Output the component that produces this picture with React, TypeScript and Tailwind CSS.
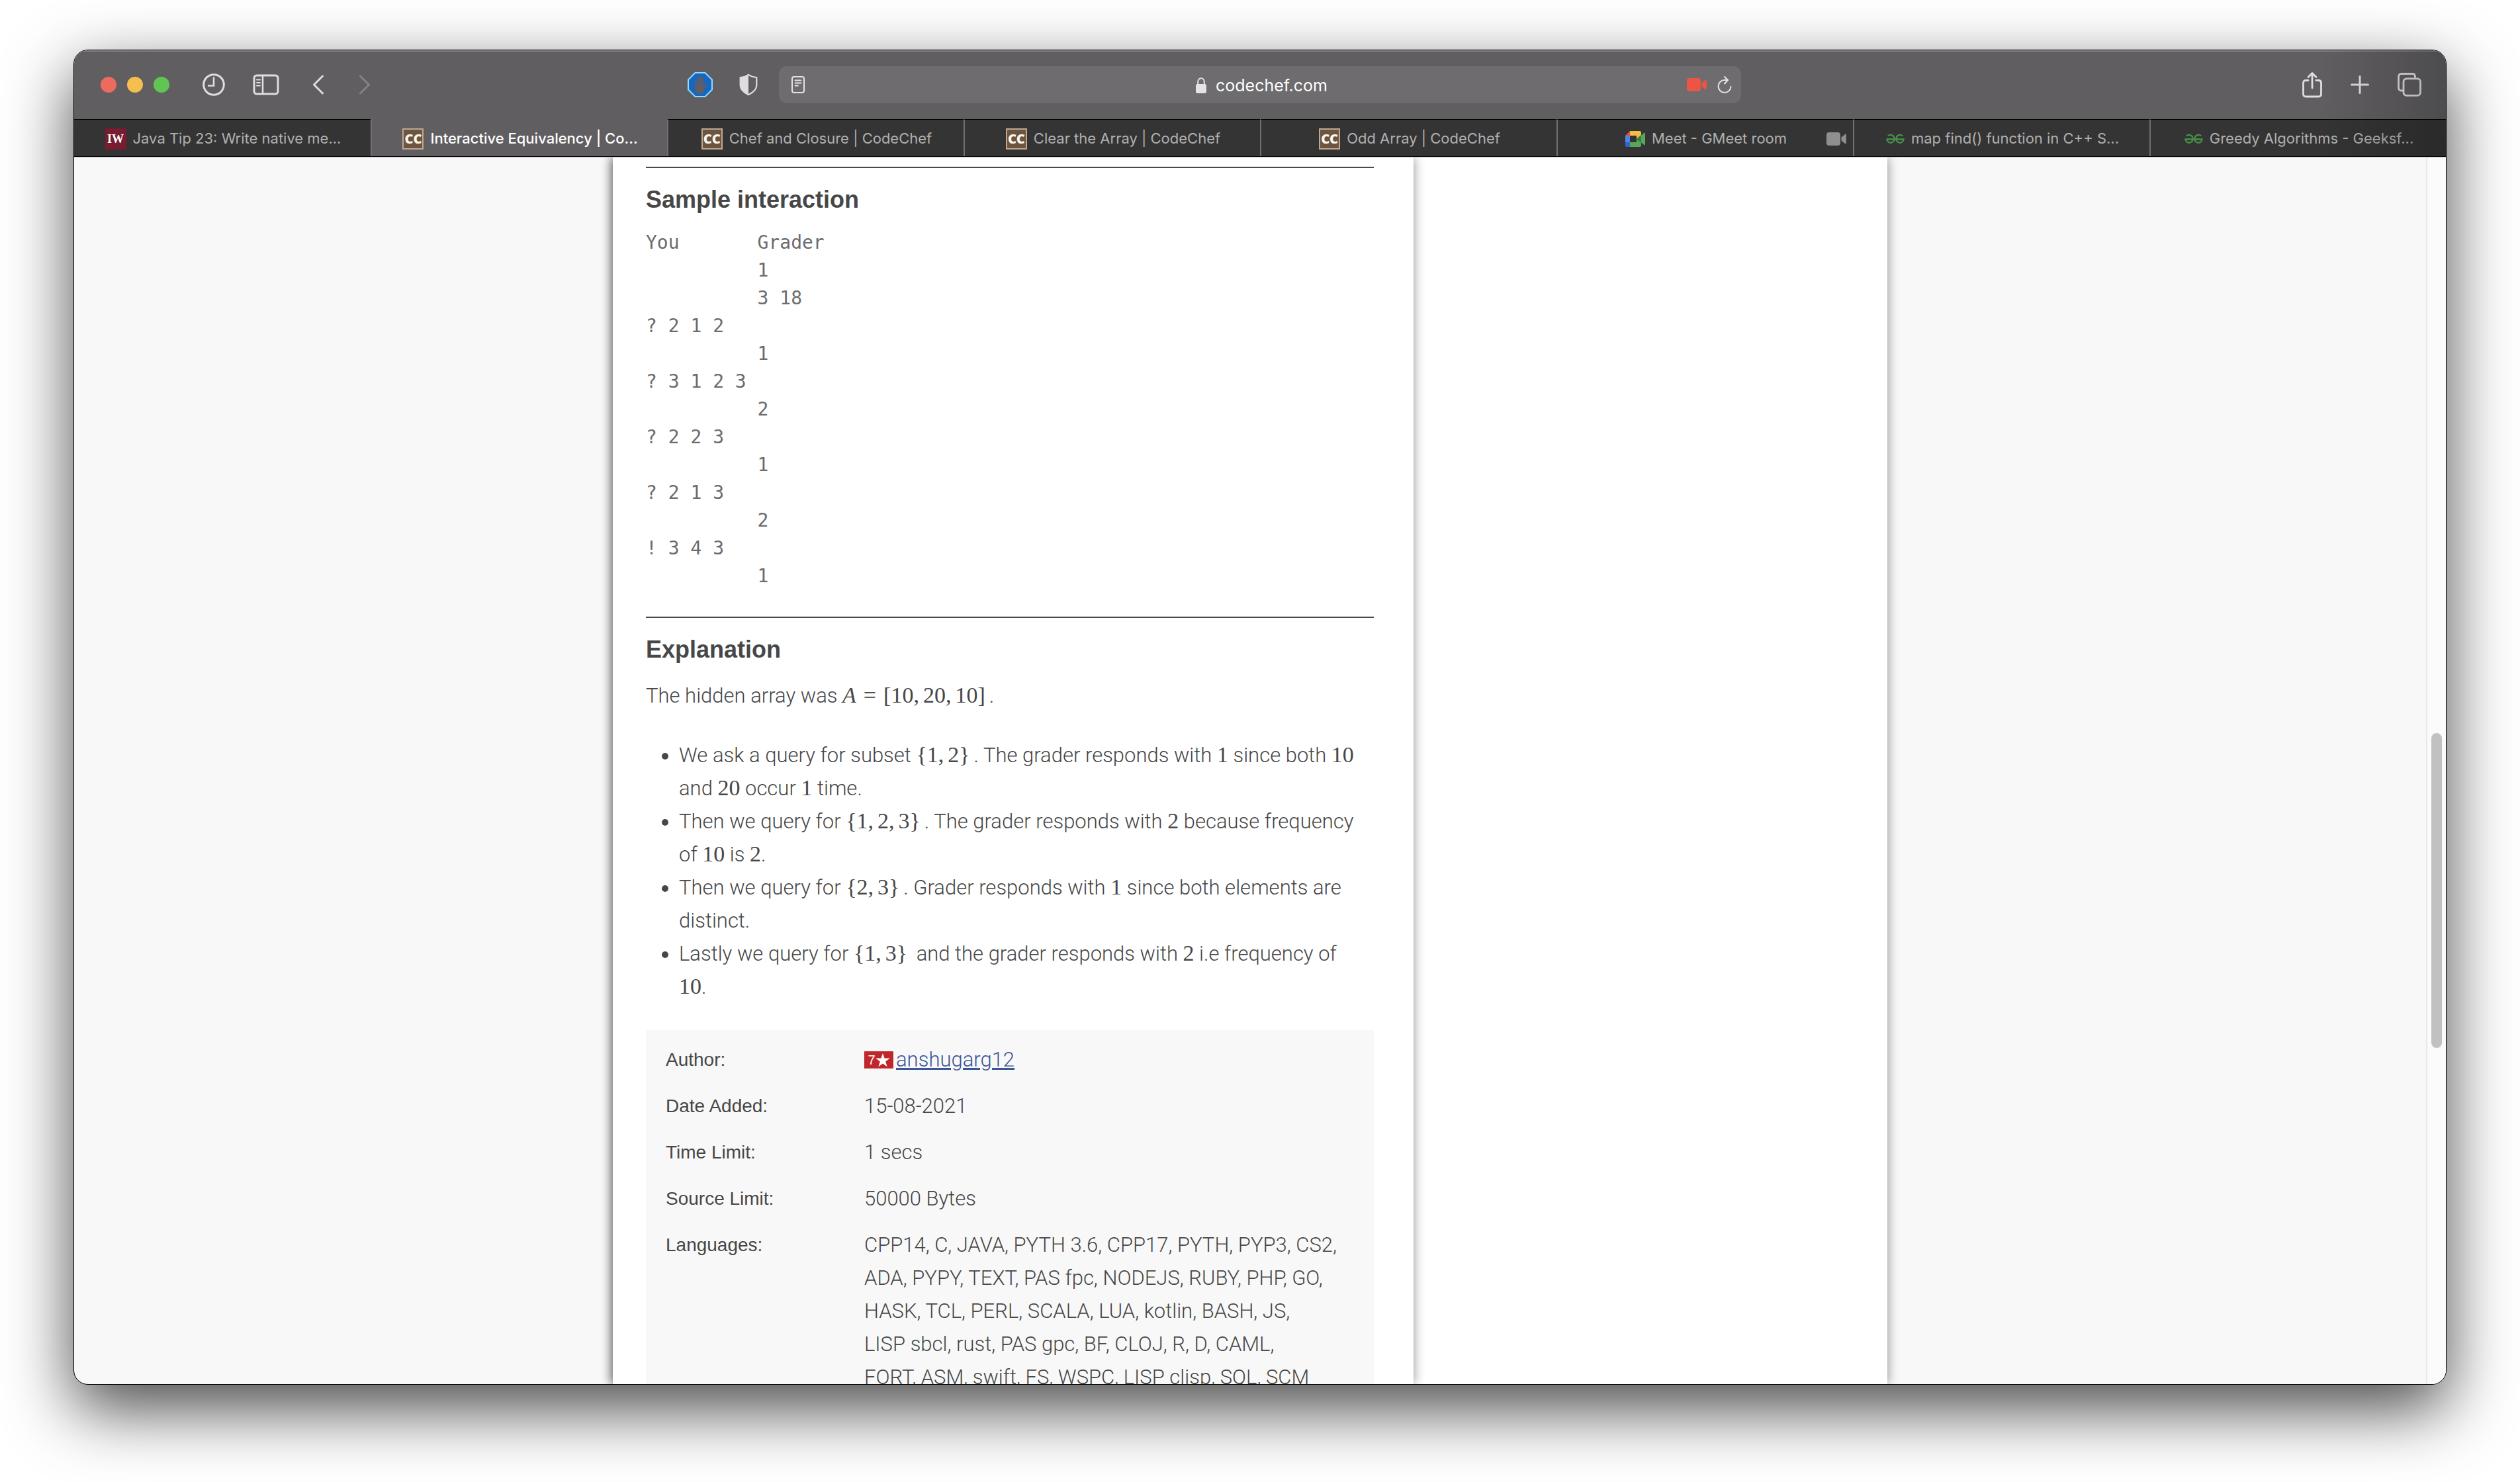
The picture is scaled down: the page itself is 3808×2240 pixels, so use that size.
import type { ReactNode } from 'react';

/* ---------- toolbar icons ---------- */

const ClockIcon = () => (
  <svg width="34" height="40" viewBox="0 0 34 40" fill="none" stroke="#dfdde0" strokeWidth="3">
    <circle cx="17" cy="20" r="15.3" />
    <path d="M17 8.5V21.5H8" strokeWidth="2.6" />
  </svg>
);

const SidebarIcon = () => (
  <svg width="40" height="32" viewBox="0 0 40 32" fill="none" stroke="#dfdde0">
    <rect x="2" y="2" width="36" height="28" rx="4" strokeWidth="3" />
    <path d="M15 2V30" strokeWidth="2.6" />
    <path d="M6 8.5H11M6 13H11M6 17.5H11" strokeWidth="2" strokeLinecap="round" />
  </svg>
);

const BackIcon = () => (
  <svg width="18" height="32" viewBox="0 0 18 32" fill="none" stroke="#dfdde0" strokeWidth="3" strokeLinecap="round" strokeLinejoin="round">
    <path d="M15.5 3L2.5 16L15.5 29" />
  </svg>
);

const ForwardIcon = () => (
  <svg width="18" height="32" viewBox="0 0 18 32" fill="none" stroke="#858386" strokeWidth="3" strokeLinecap="round" strokeLinejoin="round">
    <path d="M2.5 3L15.5 16L2.5 29" />
  </svg>
);

const BlockerIcon = () => (
  <svg width="38" height="38" viewBox="0 0 38 38" fill="none">
    <path d="M11.5 1H26.5L37 11.5V26.5L26.5 37H11.5L1 26.5V11.5Z" fill="#1766c0" stroke="#8fdcff" strokeWidth="2" />
    <g stroke="#605e61" strokeWidth="2.6" strokeLinecap="round">
      <path d="M12.3 13V22M15.8 8.500V20M19.300 7V20M22.800 9V21" />
      <path d="M28 17.500L24 25" />
    </g>
    <path d="M11 19H24V24L26 22C25 28 24 32.500 18.500 32.500C13 32.500 11 29 11 24Z" fill="#605e61" />
  </svg>
);

const ShieldIcon = () => (
  <svg width="28" height="34" viewBox="0 0 28 34">
    <path d="M14 1.800C17.500 4.300 21.500 5.500 26.300 6V18C26.300 24.500 21 28.800 14 32.200C7 28.800 1.700 24.500 1.700 18V6C6.500 5.500 10.500 4.300 14 1.800Z" fill="none" stroke="#dfdde0" strokeWidth="2.200" strokeLinejoin="round" />
    <path d="M14 1.800V32.200C7 28.800 1.700 24.500 1.700 18V6C6.500 5.500 10.500 4.300 14 1.800Z" fill="#dfdde0" />
  </svg>
);

const ReaderIcon = () => (
  <svg width="20" height="26" viewBox="0 0 20 26" fill="none" stroke="#e4e3e5" strokeLinecap="round">
    <rect x="1" y="1" width="18" height="24" rx="3" strokeWidth="2" />
    <path d="M5.500 6.500H14.500M5.500 10.500H14.500M5.500 14.500H10" strokeWidth="1.800" />
  </svg>
);

const LockIcon = () => (
  <svg width="16" height="24" viewBox="0 0 16 24">
    <path d="M3.200 11V6.800C3.200 3.700 5.100 1.200 8 1.200S12.800 3.700 12.800 6.800V11" fill="none" stroke="#e4e3e5" strokeWidth="2" />
    <rect x="0" y="10" width="16" height="14" rx="2.500" fill="#e4e3e5" />
  </svg>
);

const CameraIcon = ({ color }: { color: string }) => (
  <svg width="30" height="20" viewBox="0 0 30 20" fill={color}>
    <rect x="0" y="0" width="21" height="20" rx="4" />
    <path d="M22.500 7.500L28 3C29 2.300 29.800 2.600 29.800 3.800V16.200C29.800 17.400 29 17.700 28 17L22.500 12.500Z" />
  </svg>
);

const ReloadIcon = () => (
  <svg width="22" height="28" viewBox="0 0 22 28" fill="none" stroke="#e4e3e5" strokeWidth="2" strokeLinecap="round" strokeLinejoin="round">
    <path d="M15.500 7H11A9.500 9.500 0 1 0 20.500 17" />
    <path d="M11 2L16 7L11 12.500" />
  </svg>
);

const ShareIcon = () => (
  <svg width="30" height="40" viewBox="0 0 30 40" fill="none" stroke="#dfdde0" strokeWidth="2.800" strokeLinecap="round" strokeLinejoin="round">
    <path d="M9 13.500H5.500C3 13.500 1.500 15 1.500 17.500V34C1.500 36.500 3 38 5.500 38H24.500C27 38 28.500 36.500 28.500 34V17.500C28.500 15 27 13.500 24.500 13.500H21" />
    <path d="M15 25V3M9 8.500L15 2.500L21 8.500" />
  </svg>
);

const PlusIcon = () => (
  <svg width="28" height="28" viewBox="0 0 28 28" stroke="#dfdde0" strokeWidth="3" strokeLinecap="round">
    <path d="M14 1.500V26.500M1.500 14H26.500" />
  </svg>
);

const TabsIcon = () => (
  <svg width="36" height="36" viewBox="0 0 36 36" fill="none" stroke="#dfdde0" strokeWidth="2.800">
    <path d="M9 27H6C3 27 1.500 25.500 1.500 22.500V6C1.500 3 3 1.500 6 1.500H22C25 1.500 26.500 3 26.500 6V8.500" />
    <rect x="9" y="8.800" width="25.500" height="25.500" rx="4.500" />
  </svg>
);

/* ---------- favicons ---------- */

const ChefFavicon = () => (
  <span className="flex size-8 shrink-0 items-center justify-center border-2 border-[#bfa88f] bg-[#6c5541] font-['Open_Sans'] text-[20px] font-extrabold leading-none text-[#fdf6ec]">
    CC
  </span>
);

const InfoWorldFavicon = () => (
  <span className="flex size-8 shrink-0 items-center justify-center bg-[#771c31] font-['Liberation_Serif'] text-[18px] font-bold leading-none text-white">
    IW
  </span>
);

const MeetFavicon = () => (
  <svg width="30" height="24" viewBox="0 0 30 24" className="shrink-0">
    <path d="M0 7L7 0V7Z" fill="#e2503f" />
    <path d="M7 0H21.500Q24 0 24 2.500V7H7Z" fill="#f3bc42" />
    <path d="M0 7H7V17H0Z" fill="#4c83ec" />
    <path d="M0 17H7V24H2.500Q0 24 0 21.500Z" fill="#2f66cf" />
    <path d="M7 17H17V12L24 6V21.500Q24 24 21.500 24H7Z" fill="#57a65c" />
    <path d="M17 7H24V6L17 12Z" fill="#f3bc42" />
    <path d="M17 12L24 6V18Z" fill="#387c3e" />
    <path d="M24 6.500L28.500 3Q30 2.200 30 4V20Q30 21.800 28.500 21L24 17.500Z" fill="#57a65c" />
  </svg>
);

const GeeksFavicon = () => (
  <svg width="28" height="16" viewBox="0 0 28 16" className="shrink-0" fill="none" stroke="#479149" strokeWidth="2.400">
    <path d="M3 3.500C5 1 12.500 .8 12.500 8C12.500 15.500 2 15.500 1.500 8.500H26.500C26 15.500 15.500 15.500 15.500 8C15.500 .8 23 1 25 3.500" />
  </svg>
);

/* ---------- browser chrome ---------- */

interface TabInfo {
  title: string;
  icon: ReactNode;
  active?: boolean;
  capturing?: boolean;
}

const tabs: TabInfo[] = [
  { title: 'Java Tip 23: Write native me...', icon: <InfoWorldFavicon /> },
  { title: 'Interactive Equivalency | Co...', icon: <ChefFavicon />, active: true },
  { title: 'Chef and Closure | CodeChef', icon: <ChefFavicon /> },
  { title: 'Clear the Array | CodeChef', icon: <ChefFavicon /> },
  { title: 'Odd Array | CodeChef', icon: <ChefFavicon /> },
  { title: 'Meet - GMeet room', icon: <MeetFavicon />, capturing: true },
  { title: 'map find() function in C++ S...', icon: <GeeksFavicon /> },
  { title: 'Greedy Algorithms - Geeksf...', icon: <GeeksFavicon /> },
];

function Tab({ tab }: { tab: TabInfo }) {
  return (
    <button
      type="button"
      role="tab"
      aria-selected={!!tab.active}
      className={
        'relative flex h-14 min-w-0 items-center justify-center gap-[10px] border-t border-l-2 pt-[2px] pl-[2px] text-[22px] whitespace-nowrap first:border-l-0 ' +
        (tab.active
          ? 'border-t-[#605e61] border-l-[#706f71] bg-[#605e61] font-medium text-white'
          : 'border-t-black border-l-[#706f71] bg-[#343435] text-[#b0b0b0]')
      }
    >
      {tab.icon}
      <span>{tab.title}</span>
      {tab.capturing && (
        <span className="absolute right-[10px]">
          <CameraIcon color="#8f8f8f" />
        </span>
      )}
    </button>
  );
}

function IconButton({ label, children }: { label: string; children: ReactNode }) {
  return (
    <button type="button" aria-label={label} className="flex shrink-0 items-center justify-center">
      {children}
    </button>
  );
}

function Toolbar() {
  return (
    <div className="grid h-[104px] grid-cols-[1fr_1454px_1fr] items-center border-t-2 border-[#858386] bg-[#605e61] pb-[2px]">
      <div className="flex items-center justify-between pr-8 pl-10">
        <div className="flex items-center">
          <div className="flex gap-4">
            <button type="button" aria-label="Close window" className="size-6 rounded-full bg-[#ec6a5e]" />
            <button type="button" aria-label="Minimize window" className="size-6 rounded-full bg-[#f4bf4f]" />
            <button type="button" aria-label="Zoom window" className="size-6 rounded-full bg-[#61c554]" />
          </div>
          <div className="ml-[50px] flex items-center">
            <IconButton label="History"><ClockIcon /></IconButton>
            <div className="ml-[42px] flex"><IconButton label="Show sidebar"><SidebarIcon /></IconButton></div>
            <div className="ml-[50px] flex gap-[52px]">
              <IconButton label="Back"><BackIcon /></IconButton>
              <IconButton label="Forward"><ForwardIcon /></IconButton>
            </div>
          </div>
        </div>
        <div className="flex items-center gap-10">
          <IconButton label="Content blocker"><BlockerIcon /></IconButton>
          <IconButton label="Privacy report"><ShieldIcon /></IconButton>
        </div>
      </div>

      <div className="grid h-14 grid-cols-[1fr_auto_1fr] items-center rounded-xl bg-[#6e6c6f] pr-[14px] pl-[19px]">
        <div className="flex"><IconButton label="Show reader"><ReaderIcon /></IconButton></div>
        <button type="button" className="flex items-center gap-[14px] pt-[2px] text-[25px] leading-8 text-white">
          <LockIcon />
          codechef.com
        </button>
        <div className="flex items-center justify-end gap-4">
          <IconButton label="Camera in use"><CameraIcon color="#ec5545" /></IconButton>
          <IconButton label="Reload"><ReloadIcon /></IconButton>
        </div>
      </div>

      <div className="flex items-center justify-end gap-[43px] pr-[37px]">
        <IconButton label="Share"><ShareIcon /></IconButton>
        <IconButton label="New tab"><PlusIcon /></IconButton>
        <IconButton label="Show all tabs"><TabsIcon /></IconButton>
      </div>
    </div>
  );
}

/* ---------- problem page ---------- */

const session = `You       Grader
          1
          3 18
? 2 1 2
          1
? 3 1 2 3
          2
? 2 2 3
          1
? 2 1 3
          2
! 3 4 3
          1`;

function M({ children }: { children: ReactNode }) {
  return <span className="font-['Liberation_Serif'] text-[34px] leading-none font-normal whitespace-nowrap">{children}</span>;
}

function Seq({ open, close, items }: { open: string; close: string; items: number[] }) {
  return (
    <span className="mr-[6px]">
      <M>
        {open}
        {items.map((n, i) => (
          <span key={i}>
            {n}
            {i < items.length - 1 && <span className="mr-[6px]">,</span>}
          </span>
        ))}
        {close}
      </M>
    </span>
  );
}

function SectionTitle({ children }: { children: ReactNode }) {
  return <h3 className="mt-6 mb-5 font-['Liberation_Sans'] text-[36px] leading-[48px] font-bold">{children}</h3>;
}

const languageLines = [
  'CPP14, C, JAVA, PYTH 3.6, CPP17, PYTH, PYP3, CS2,',
  'ADA, PYPY, TEXT, PAS fpc, NODEJS, RUBY, PHP, GO,',
  'HASK, TCL, PERL, SCALA, LUA, kotlin, BASH, JS,',
  'LISP sbcl, rust, PAS gpc, BF, CLOJ, R, D, CAML,',
  'FORT, ASM, swift, FS, WSPC, LISP clisp, SQL, SCM',
];

const details: [string, ReactNode][] = [
  [
    'Author:',
    <span key="author" className="flex items-center gap-1">
      <span className="flex h-[26px] w-11 items-center justify-center bg-[#c0272b] font-['Liberation_Sans'] text-[20px] leading-none text-white">
        7
        <svg width="22" height="21" viewBox="0 0 22 21" fill="#fff">
          <path d="M11 0L13.600 7.600H21.700L15.200 12.400L17.600 20.300L11 15.500L4.400 20.300L6.800 12.400L0.300 7.600H8.400Z" />
        </svg>
      </span>
      <a href="#anshugarg12" className="text-[#3b5595] underline">anshugarg12</a>
    </span>,
  ],
  ['Date Added:', '15-08-2021'],
  ['Time Limit:', '1 secs'],
  ['Source Limit:', '50000 Bytes'],
  ['Languages:', languageLines.map((line) => <div key={line}>{line}</div>)],
];

function Problem() {
  return (
    <article className="w-[1210px] shrink-0 bg-white pt-[14px] pr-[60px] pl-[50px] font-[Roboto] text-[31px] leading-[50px] font-light text-[#474747] shadow-[0_0_16px_rgba(0,0,0,0.45)]">
      <hr className="border-t-2 border-[#4a4a4a]" />
      <SectionTitle>Sample interaction</SectionTitle>
      <pre className="font-['DejaVu_Sans_Mono'] text-[28px] leading-[42px] font-normal text-[#6c6c6c]">{session}</pre>
      <hr className="mt-10 border-t-2 border-[#4a4a4a]" />
      <SectionTitle>Explanation</SectionTitle>
      <p className="pt-px">
        The hidden array was{' '}
        <M>
          <i>A</i>
          <span className="mx-[11px]">=</span>
        </M>
        <Seq open="[" close="]" items={[10, 20, 10]} />.
      </p>
      <ul className="mt-10 list-disc pr-5 pl-[50px]">
        <li>
          We ask a query for subset <Seq open="{" close="}" items={[1, 2]} />. The grader responds with <M>1</M> since both <M>10</M> and <M>20</M> occur <M>1</M> time.
        </li>
        <li>
          Then we query for <Seq open="{" close="}" items={[1, 2, 3]} />. The grader responds with <M>2</M> because frequency of <M>10</M> is <M>2</M>.
        </li>
        <li>
          Then we query for <Seq open="{" close="}" items={[2, 3]} />. Grader responds with <M>1</M> since both elements are distinct.
        </li>
        <li>
          Lastly we query for <Seq open="{" close="}" items={[1, 3]} /> and the grader responds with <M>2</M> i.e frequency of <M>10</M>.
        </li>
      </ul>
      <div className="mt-10 bg-[#f8f8f8] py-[10px]">
        <table className="w-full">
          <tbody>
            {details.map(([label, value]) => (
              <tr key={label} className="align-top">
                <th scope="row" className="w-[330px] py-[10px] pl-[30px] text-left font-['Liberation_Sans'] text-[28px] font-normal">
                  {label}
                </th>
                <td className="py-[10px] pr-6 whitespace-nowrap">{value}</td>
              </tr>
            ))}
          </tbody>
        </table>
      </div>
    </article>
  );
}

export default function App() {
  return (
    <div className="h-screen overflow-hidden bg-white px-[111px] pt-[75px] pb-[147px] font-[Inter]">
      <div className="flex h-full flex-col overflow-hidden rounded-[22px] border border-black bg-[#f8f8f8] shadow-[0_36px_100px_rgba(0,0,0,0.72)]">
        <header className="relative shrink-0 border-b border-black">
          <Toolbar />
          <div role="tablist" className="grid grid-cols-8">
            {tabs.map((tab) => (
              <Tab key={tab.title} tab={tab} />
            ))}
          </div>
          <div className="pointer-events-none absolute inset-y-0 right-0 w-[190px] bg-linear-to-r from-transparent to-black/20" />
        </header>
        <main className="flex min-h-0 flex-1 overflow-hidden border-t border-[#bdbdbd]">
          <div className="flex min-w-0 flex-1 justify-center">
            <div className="flex w-full max-w-[1926px] bg-white shadow-[0_0_16px_rgba(0,0,0,0.45)]">
              <Problem />
            </div>
          </div>
          <div className="w-[30px] shrink-0 border-l-2 border-[#e8e8e8] bg-[#fbfbfb] pl-[6px]">
            <div className="mt-[870px] h-[476px] w-4 rounded-full bg-[#c1c1c1]" />
          </div>
        </main>
      </div>
    </div>
  );
}
